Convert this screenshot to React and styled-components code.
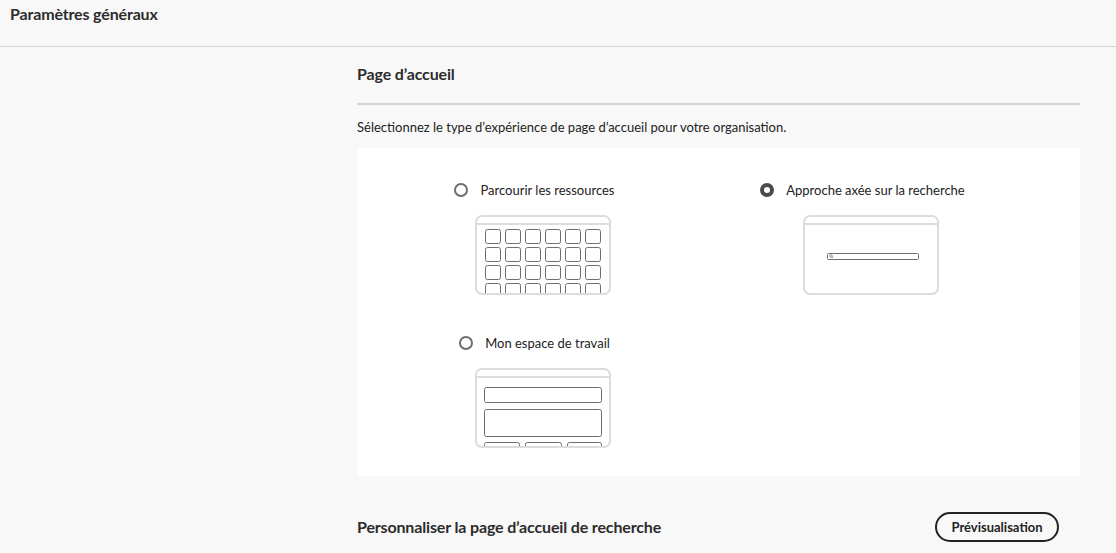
import React from "react";
import styled, { createGlobalStyle } from "styled-components";

const GlobalStyle = createGlobalStyle`
  body {
    margin: 0;
    background: #f8f8f8;
    font-family: Lato, "Noto Sans", sans-serif;
    color: #222;
  }
`;

const Header = styled.header`
  box-sizing: border-box;
  height: 47px;
  padding: 4px 10px 0;
  border-bottom: 1px solid #d5d5d5;
`;

const PageTitle = styled.h1`
  margin: 0;
  font-size: 16px;
  line-height: 20px;
  font-weight: 700;
  letter-spacing: -0.15px;
  color: #2c2c2c;
`;

const Main = styled.main`
  width: 723px;
  margin-left: 357px;
`;

const SectionTitle = styled.h2`
  margin: 17px 0 0;
  padding-bottom: 19px;
  border-bottom: 2px solid #d3d3d3;
  font-size: 16px;
  line-height: 20px;
  font-weight: 700;
  letter-spacing: -0.15px;
  color: #2c2c2c;
`;

const Description = styled.p`
  margin: 12px 0 11px;
  font-size: 13px;
  line-height: 20px;
  color: #222;
`;

const Panel = styled.div`
  box-sizing: border-box;
  height: 328px;
  padding: 32px 0 28px 22px;
  background: #fff;
  display: grid;
  grid-template-columns: 328px 328px;
  row-gap: 38px;
  align-content: start;
`;

const Option = styled.label`
  display: flex;
  flex-direction: column;
  align-items: center;
  gap: 15px;
  cursor: pointer;
`;

const OptionLabel = styled.span`
  display: flex;
  align-items: center;
  gap: 12px;
  height: 20px;
  padding-right: 17px;
  font-size: 13px;
  color: #222;
`;

const Radio = styled.span`
  box-sizing: border-box;
  width: 14px;
  height: 14px;
  border-radius: 50%;
  border: ${(p) => (p.$checked ? "4px solid #4b4b4b" : "2px solid #6e6e6e")};
  background: #fff;
  flex-shrink: 0;
`;

const Footer = styled.div`
  display: flex;
  align-items: center;
  justify-content: space-between;
  margin-top: 36px;
  padding-right: 21px;
`;

const FooterTitle = styled.h3`
  margin: 0;
  font-size: 16px;
  line-height: 20px;
  font-weight: 700;
  letter-spacing: -0.15px;
  color: #2c2c2c;
`;

const PreviewButton = styled.button`
  box-sizing: border-box;
  height: 30px;
  width: 124px;
  border: 2px solid #222;
  border-radius: 15px;
  background: #f8f8f8;
  font-family: inherit;
  font-size: 13px;
  font-weight: 700;
  color: #222;
  cursor: pointer;
`;

const FRAME = "#dcdcdc";
const INK = "#6e6e6e";

const Frame = ({ id, children }) => (
  <svg width="136" height="80" viewBox="0 0 136 80">
    <defs>
      <clipPath id={id}>
        <rect x="0" y="0" width="136" height="78" />
      </clipPath>
    </defs>
    <g clipPath={`url(#${id})`}>{children}</g>
    <rect x="1" y="1" width="134" height="78" rx="6" fill="none" stroke={FRAME} strokeWidth="2" />
    <line x1="1" y1="9" x2="135" y2="9" stroke={FRAME} strokeWidth="2" />
  </svg>
);

const BrowseArt = () => {
  const cells = [];
  for (let r = 0; r < 4; r++) {
    for (let c = 0; c < 6; c++) {
      cells.push(
        <rect
          key={`${r}-${c}`}
          x={10.5 + c * 20}
          y={14.5 + r * 18}
          width="15"
          height="14"
          rx="2"
          fill="none"
          stroke={INK}
        />
      );
    }
  }
  return <Frame id="browse">{cells}</Frame>;
};

const SearchArt = () => (
  <Frame id="search">
    <rect x="24.5" y="38.5" width="91" height="6" rx="1" fill="none" stroke={INK} />
    <circle cx="28" cy="41" r="1.3" fill="none" stroke={INK} strokeWidth="0.7" />
    <line x1="29" y1="42" x2="30" y2="43" stroke={INK} strokeWidth="0.7" />
  </Frame>
);

const WorkspaceArt = () => (
  <Frame id="workspace">
    <rect x="9.5" y="19.5" width="117" height="15" rx="2" fill="none" stroke={INK} />
    <rect x="9.5" y="41.5" width="117" height="27" rx="2" fill="none" stroke={INK} />
    <rect x="9.5" y="74.5" width="35" height="14" rx="2" fill="none" stroke={INK} />
    <rect x="50.5" y="74.5" width="36" height="14" rx="2" fill="none" stroke={INK} />
    <rect x="92.5" y="74.5" width="34" height="14" rx="2" fill="none" stroke={INK} />
  </Frame>
);

const options = [
  { key: "browse", label: "Parcourir les ressources", Art: BrowseArt },
  { key: "search", label: "Approche axée sur la recherche", Art: SearchArt },
  { key: "workspace", label: "Mon espace de travail", Art: WorkspaceArt },
];

const App = () => {
  const [selected, setSelected] = React.useState("search");

  return (
    <>
      <GlobalStyle />
      <Header>
        <PageTitle>Paramètres généraux</PageTitle>
      </Header>
      <Main>
        <SectionTitle>Page d’accueil</SectionTitle>
        <Description>
          Sélectionnez le type d’expérience de page d’accueil pour votre organisation.
        </Description>
        <Panel>
          {options.map(({ key, label, Art }) => (
            <Option key={key} onClick={() => setSelected(key)}>
              <OptionLabel>
                <Radio $checked={selected === key} />
                {label}
              </OptionLabel>
              <Art />
            </Option>
          ))}
        </Panel>
        <Footer>
          <FooterTitle>Personnaliser la page d’accueil de recherche</FooterTitle>
          <PreviewButton>Prévisualisation</PreviewButton>
        </Footer>
      </Main>
    </>
  );
};

export default App;
